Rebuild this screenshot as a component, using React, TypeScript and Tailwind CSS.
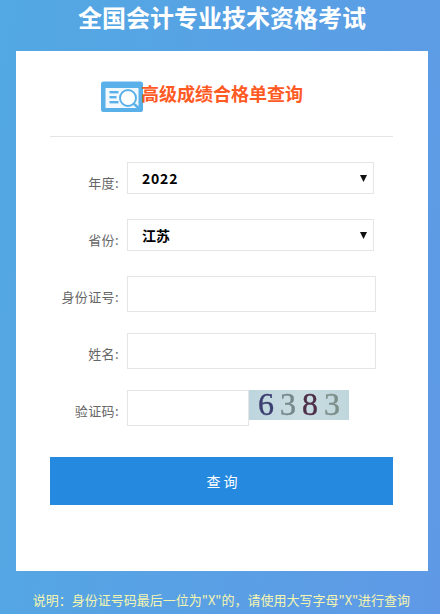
import React from "react";

function Row({ label, children, mb }: { label: string; children: React.ReactNode; mb: string }) {
  return (
    <div className={`flex items-start ${mb}`}>
      <label className="w-[77px] pr-[8px] pt-[11px] text-right text-[13px] leading-[20px] tracking-[0.4px] text-[#666]">{label}</label>
      {children}
    </div>
  );
}

function Logo() {
  return (
    <svg width="43" height="32" viewBox="0 0 43 32" className="shrink-0">
      <rect x="0" y="0.5" width="42" height="30.5" rx="2.5" fill="#5AB1EA" />
      <rect x="4.5" y="7" width="33" height="20" fill="#F2F9FE" />
      <rect x="8.5" y="10" width="9" height="2.4" fill="#5AB1EA" />
      <rect x="8.5" y="15" width="7" height="2.4" fill="#5AB1EA" />
      <rect x="8.5" y="20" width="9" height="2.4" fill="#5AB1EA" />
      <circle cx="27" cy="17" r="8" fill="#fff" stroke="#5AB1EA" strokeWidth="2" />
      <path d="M33 23l8 7" stroke="#5AB1EA" strokeWidth="2.4" fill="none" />
    </svg>
  );
}

function Select({ value, className }: { value: string; className: string }) {
  return (
    <div className="relative">
      <select defaultValue={value} className={`block h-8 w-[247px] appearance-none border border-[#e5e5e5] bg-white pl-[14px] text-[14px] font-bold text-black outline-none ${className}`}>
        <option>{value}</option>
      </select>
      <svg width="7" height="7" viewBox="0 0 7 7" className="pointer-events-none absolute top-[13px] right-[7px]">
        <path d="M0 0h7L3.5 7z" fill="#111" />
      </svg>
    </div>
  );
}

export default function App() {
  const font = "font-['Noto_Sans_CJK_SC','Noto_Sans',sans-serif]";
  return (
    <div className={`${font} h-[614px] w-[440px] overflow-hidden bg-[linear-gradient(100deg,#52a9e3,#5f99e6)]`}>
      <h1 className="h-[51px] pt-[1px] pl-[4px] text-center text-[24px] leading-[32px] font-bold text-white">全国会计专业技术资格考试</h1>
      <div className="mr-3 ml-4 h-[520px] bg-white pt-[30px] pr-[35px] pl-[34px]">
        <div className="flex h-[55px] items-start pl-[51px]">
          <Logo />
          <span className="-ml-[3px] text-[18px] leading-[24px] font-bold text-[#ff5a24]">高级成绩合格单查询</span>
        </div>
        <div className="mb-[25px] h-px bg-[#e5e5e5]" />
        <Row label="年度:" mb="mb-[25px]">
          <Select value="2022" className="tracking-[0.8px]" />
        </Row>
        <Row label="省份:" mb="mb-[25px]">
          <Select value="江苏" className="tracking-normal" />
        </Row>
        <Row label="身份证号:" mb="mb-[21px]">
          <input className="h-9 w-[249px] border border-[#e5e5e5] bg-white outline-none" />
        </Row>
        <Row label="姓名:" mb="mb-[21px]">
          <input className="h-9 w-[249px] border border-[#e5e5e5] bg-white outline-none" />
        </Row>
        <Row label="验证码:" mb="mb-[31px]">
          <input className="h-9 w-[122px] border border-[#e5e5e5] bg-white outline-none" />
          <div className="flex h-[30px] w-[100px] items-center justify-between bg-[linear-gradient(90deg,#bdd5de,#cadee2,#bfd6dc)] px-[9px] pb-[2px] font-['Liberation_Serif',serif] text-[32px] leading-[28px] [-webkit-text-stroke:0.4px]">
            <span className="text-[#3c3f70] blur-[0.5px]">6</span>
            <span className="text-[#76898a] blur-[0.5px]">3</span>
            <span className="text-[#4e2f48] blur-[0.5px]">8</span>
            <span className="text-[#7d8f8a] blur-[0.5px]">3</span>
          </div>
        </Row>
        <button className="h-12 w-[343px] bg-[#2589e0] pl-[4px] text-[14px] tracking-[3px] text-white">查询</button>
      </div>
      <p className="pt-[19px] pl-[3px] text-center text-[13px] leading-[20px] text-[#f4f5b0]">说明：身份证号码最后一位为"X"的，请使用大写字母"X"进行查询</p>
    </div>
  );
}
